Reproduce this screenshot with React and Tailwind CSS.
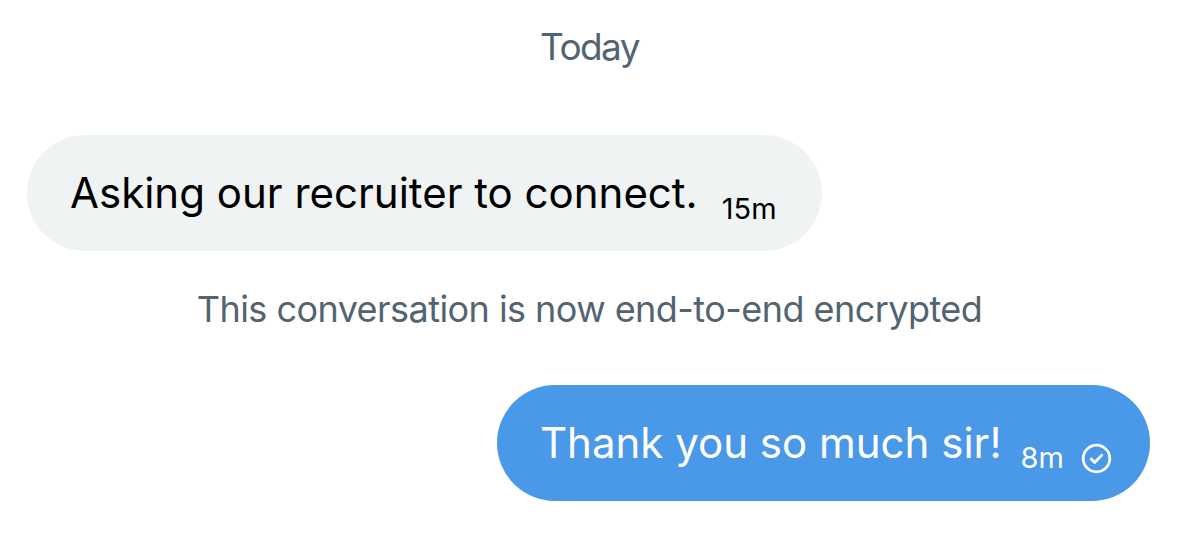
import React from "react";

function CheckCircle() {
  return (
    <svg
      width="31"
      height="31"
      viewBox="0 0 24 24"
      fill="none"
      stroke="white"
      strokeWidth="2.1"
      strokeLinecap="round"
      strokeLinejoin="round"
      className="inline-block align-[-16px]"
    >
      <circle cx="12" cy="12" r="10.3" />
      <path d="M7.9 12.4l2.7 2.7 5.5-5.7" />
    </svg>
  );
}

export default function App() {
  return (
    <div className="w-[1179px] h-[534px] bg-white flex flex-col font-['Inter','Roboto',sans-serif] overflow-hidden">
      <div className="mt-[23px] text-center text-[37px] leading-[48px] tracking-[-1.6px] text-[#536471]">
        Today
      </div>

      <div className="mt-[64px] ml-[27px] self-start">
        <div className="h-[116px] w-[795px] rounded-full bg-[#eff3f4] pl-[43px] leading-[116px] whitespace-nowrap text-black">
          <span className="text-[42px]">Asking our recruiter to connect.</span>
          <span className="ml-[24px] text-[29px] leading-none align-[-11px]">15m</span>
        </div>
      </div>

      <div className="mt-[34px] text-center text-[36px] leading-[48px] tracking-[-0.55px] text-[#536471]">
        This conversation is now end-to-end encrypted
      </div>

      <div className="mt-[52px] mr-[29px] self-end">
        <div className="h-[116px] w-[653px] rounded-full bg-[#4a98e8] pl-[43px] leading-[116px] whitespace-nowrap text-white">
          <span className="text-[42px]">Thank you so much sir!</span>
          <span className="ml-[19px] text-[29px] leading-none align-[-10px]">8m</span>
          <span className="ml-[17px]">
            <CheckCircle />
          </span>
        </div>
      </div>
    </div>
  );
}
